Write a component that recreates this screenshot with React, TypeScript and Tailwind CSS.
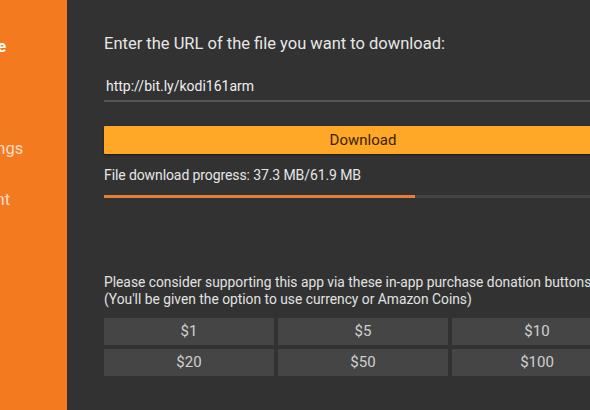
const amounts = ["$1", "$5", "$10", "$20", "$50", "$100"];

const navItems = [
  { label: "Home", shift: "-ml-[38px]", active: true },
  { label: "Browser", shift: "-ml-[63px]", active: false },
  { label: "Settings", shift: "-ml-[37px]", active: false },
  { label: "Account", shift: "-ml-[51px]", active: false },
];

export default function App() {
  return (
    <div className="w-[590px] h-[410px] overflow-hidden flex bg-[#323232] font-['Roboto','Noto_Sans',sans-serif]">
      {/* Sidebar (scrolled partly off-screen) */}
      <aside className="w-[67px] shrink-0 bg-[#f47a20] overflow-hidden pt-[36px] flex flex-col gap-[29px]">
        {navItems.map((n) => (
          <div
            key={n.label}
            className={`${n.shift} whitespace-nowrap text-[16.5px] leading-[22px] ${
              n.active ? "font-bold text-white" : "text-white/75"
            }`}
          >
            {n.label}
          </div>
        ))}
      </aside>

      {/* Main */}
      <main className="pl-[37px] pt-[34px] shrink-0 w-[555px] text-[#e6e6e6]">
        <p className="text-[16.5px] leading-[20px]">
          Enter the URL of the file you want to download:
        </p>

        <div className="mt-[22px] pl-[2px] pb-[4px] border-b-2 border-[#555] text-[14px] leading-[20px] text-[#eee]">
          http://bit.ly/kodi161arm
        </div>

        <button className="mt-[24px] w-full h-[28px] bg-[#ffa726] text-[#3a2300] text-[15px] rounded-[1px] shadow-[0_1px_2px_rgba(0,0,0,0.5)]">
          Download
        </button>

        <p className="mt-[11px] text-[14px] leading-[20px] tracking-[-0.1px]">
          File download progress: 37.3 MB/61.9 MB
        </p>

        <div className="mt-[10px] h-[3px] w-full bg-[#444] flex">
          <div className="h-full w-[311px] bg-[#e0803a]" />
        </div>

        <div className="mt-[76px] text-[13.8px] leading-[17px] text-[#e2e2e2]">
          <p className="whitespace-nowrap">
            Please consider supporting this app via these in-app purchase donation buttons
          </p>
          <p>(You'll be given the option to use currency or Amazon Coins)</p>
        </div>

        <div className="mt-[10px] grid grid-cols-3 gap-[4px]">
          {amounts.map((a) => (
            <button
              key={a}
              className="h-[27px] bg-[#454545] text-[15px] text-[#d0d0d0]"
            >
              {a}
            </button>
          ))}
        </div>
      </main>
    </div>
  );
}
